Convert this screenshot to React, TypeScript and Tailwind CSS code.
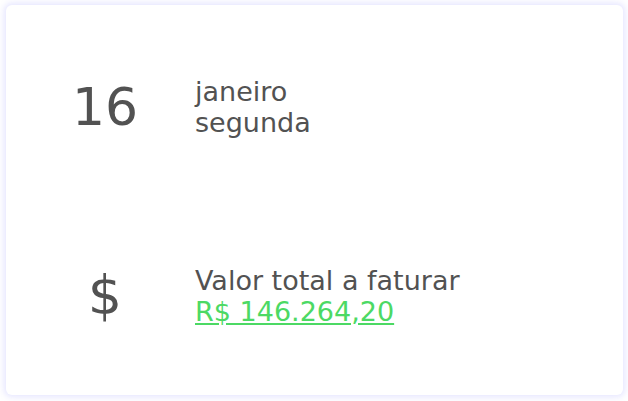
import React from 'react';

export default function App() {
  return (
    <div className="w-[628px] h-[401px] bg-white p-[6px] pt-[5px]" style={{ fontFamily: '"DejaVu Sans", Verdana, sans-serif' }}>
      <div className="h-[390px] w-[617px] rounded-[6px] bg-white shadow-[0_0_6px_2px_rgba(110,110,255,0.18)] pt-[7px]">
        {/* date row */}
        <div className="h-[189px] flex items-center">
          <div className="w-[189px] pl-[9px] text-center text-[52px] leading-none text-[#525252]">16</div>
          <div className="text-[27px] leading-[31px] text-[#525252]">
            <div>janeiro</div>
            <div>segunda</div>
          </div>
        </div>

        {/* value row */}
        <div className="h-[189px] flex items-center">
          <div className="w-[189px] pl-[9px] text-center text-[54px] leading-none text-[#525252]">$</div>
          <div className="text-[27px] leading-[31px] text-[#525252]">
            <div>Valor total a faturar</div>
            <a href="#" className="text-[#4cd964] underline">R$ 146.264,20</a>
          </div>
        </div>
      </div>
    </div>
  );
}
